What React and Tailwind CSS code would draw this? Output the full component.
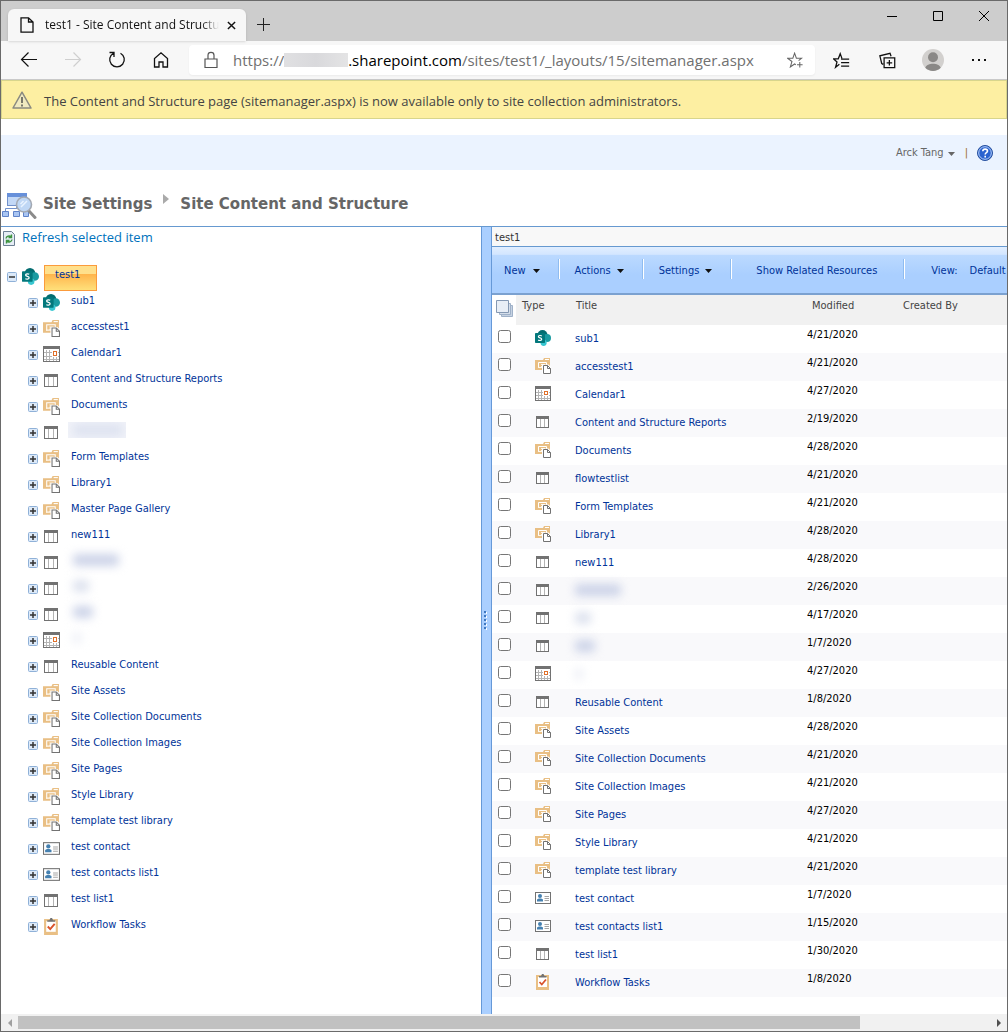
import React from 'react'

const items = [
  { name: 'sub1', type: 'site', modified: '4/21/2020' },
  { name: 'accesstest1', type: 'library', modified: '4/21/2020' },
  { name: 'Calendar1', type: 'calendar', modified: '4/27/2020' },
  { name: 'Content and Structure Reports', type: 'list', modified: '2/19/2020' },
  { name: 'Documents', type: 'library', modified: '4/28/2020' },
  { name: 'flowtestlist', type: 'list', modified: '4/21/2020', treeMask: 'w-[50px] bg-[#dde2f0]', treePatch: true },
  { name: 'Form Templates', type: 'library', modified: '4/21/2020' },
  { name: 'Library1', type: 'library', modified: '4/28/2020' },
  { name: 'Master Page Gallery', type: 'library', treeOnly: true },
  { name: 'new111', type: 'list', modified: '4/28/2020' },
  { id: 'h1', type: 'list', modified: '2/26/2020', mask: 'w-[46px] bg-[#ccd3e8]' },
  { id: 'h2', type: 'list', modified: '4/17/2020', mask: 'w-4 bg-[#dce1ee]' },
  { id: 'h3', type: 'list', modified: '1/7/2020', mask: 'w-5 bg-[#ccd3e8]' },
  { id: 'h4', type: 'calendar', modified: '4/27/2020', mask: 'w-2 bg-[#eceff6]' },
  { name: 'Reusable Content', type: 'list', modified: '1/8/2020' },
  { name: 'Site Assets', type: 'library', modified: '4/28/2020' },
  { name: 'Site Collection Documents', type: 'library', modified: '4/21/2020' },
  { name: 'Site Collection Images', type: 'library', modified: '4/21/2020' },
  { name: 'Site Pages', type: 'library', modified: '4/27/2020' },
  { name: 'Style Library', type: 'library', modified: '4/21/2020' },
  { name: 'template test library', type: 'library', modified: '4/21/2020' },
  { name: 'test contact', type: 'contact', modified: '1/7/2020' },
  { name: 'test contacts list1', type: 'contact', modified: '1/15/2020' },
  { name: 'test list1', type: 'list', modified: '1/30/2020' },
  { name: 'Workflow Tasks', type: 'task', modified: '1/8/2020' },
]

function TypeIcon({ type, className = 'size-4' }) {
  const cls = `block shrink-0 ${className}`
  if (type === 'site') {
    return (
      <svg viewBox="0 0 16 16" className={cls}>
        <circle cx="7.500" cy="5" r="5" fill="#036c70" />
        <circle cx="12" cy="8" r="4" fill="#1a9ba1" />
        <circle cx="8.600" cy="12.800" r="3.100" fill="#37c6d0" />
        <rect x="0" y="3" width="10" height="10" rx="0.8" fill="#03787c" />
        <path d="M6.800 5.900C6 5.300 3.400 5.200 3.400 6.700c0 1.600 3.300.9 3.300 2.500 0 1.600-2.700 1.500-3.500.8" fill="none" stroke="#fff" strokeWidth="1.200" />
      </svg>
    )
  }
  if (type === 'library') {
    return (
      <svg viewBox="0 0 16 16" className={cls}>
        <path d="M0 2h8l1-2h6v12H0z" fill="#e9bf84" />
        <path d="M10 1.500h4" stroke="#fff" />
        <path d="M3.500 10V4.500h8V7" fill="none" stroke="#fff" />
        <path d="M3 9.500h5M6 6.500h4M6 8.500h2" fill="none" stroke="#fff8ea" />
        <path d="M7 15.500V6.500h6.500L16 9v7H7z" fill="#fff" />
        <path d="M8.500 7.500h4l3 3v5h-7z" fill="#fff" stroke="#727272" />
        <path d="M12.500 7.500v3h3" fill="none" stroke="#727272" />
      </svg>
    )
  }
  if (type === 'calendar') {
    return (
      <svg viewBox="0 0 16 16" className={cls} shapeRendering="crispEdges">
        <rect x="0.5" y="1.5" width="15" height="13" fill="#fff" stroke="#727272" />
        <path d="M3.500 4v10M6.500 4v10M9.500 4v10M12.500 4v10M1 6.500h14M1 9.500h14M1 12.500h14" stroke="#b4b4b4" />
        <rect x="0" y="0" width="16" height="3" fill="#727272" />
        <rect x="8" y="4" width="6" height="6" fill="#fff" />
        <rect x="9.500" y="5.500" width="3" height="3" fill="#fff" stroke="#e0702a" />
      </svg>
    )
  }
  if (type === 'contact') {
    return (
      <svg viewBox="0 0 16 16" className={cls}>
        <rect x="0.5" y="2.5" width="15" height="11" fill="#fff" stroke="#727272" />
        <circle cx="5" cy="6" r="2" fill="#4580b0" />
        <path d="M2 11.500V9.500C3 8 7 8 8 9.500v2z" fill="#4580b0" />
        <path d="M9.500 6.500H14M9.500 8.500H14M9.500 10.500H14" stroke="#a5a5a5" />
      </svg>
    )
  }
  if (type === 'task') {
    return (
      <svg viewBox="0 0 16 16" className={cls}>
        <path d="M1 1h13v15H1z" fill="#e9bf84" />
        <path d="M3 3h9v10H3z" fill="#fff" />
        <path d="M4 3.500V2h2l1-2h1.500l1 2h2v1.500z" fill="#727272" />
        <path d="M4.500 8l2.300 2.500L11 5.500" fill="none" stroke="#d9532c" strokeWidth="1.800" />
      </svg>
    )
  }
  return (
    <svg viewBox="0 0 16 16" className={cls} shapeRendering="crispEdges">
      <rect x="1.500" y="2.500" width="12" height="11" fill="#fff" stroke="#727272" />
      <path d="M5.500 5v8M9.500 5v8" stroke="#b4b4b4" />
      <rect x="1" y="2" width="13" height="3" fill="#727272" />
    </svg>
  )
}

function Expander({ open }) {
  return (
    <button aria-label={open ? 'Collapse' : 'Expand'} className="mt-[7px] shrink-0">
      <svg viewBox="0 0 10 10" className="block size-[10px]">
        <rect x="0.5" y="0.5" width="9" height="9" rx="1" fill="#dce9f8" stroke="#8fb1d8" />
        <path d={open ? 'M2 5h6' : 'M2 5h6M5 2v6'} stroke="#333" strokeWidth="1.500" />
      </svg>
    </button>
  )
}

function Mask({ className }) {
  return <span className={`block h-3 rounded blur-[5px] ${className}`} />
}

function Caret({ className = '' }) {
  return (
    <svg viewBox="0 0 7 4" className={`block h-1 w-[7px] ${className}`}>
      <path d="M0 0h7L3.500 4z" fill="currentColor" />
    </svg>
  )
}

function Glyph({ children, size = 'size-5' }) {
  return (
    <svg viewBox="0 0 20 20" className={`block ${size}`} fill="none" stroke="currentColor">
      {children}
    </svg>
  )
}

function TitleBar() {
  return (
    <div className="flex h-10 items-start justify-between bg-[#cdcdcd]">
      <div className="flex h-10 items-end">
        <div className="ml-[7px] flex h-8 w-[238px] items-center rounded-t-md bg-[#f7f7f7] pr-[10px] pl-3 shadow">
          <svg viewBox="0 0 14 16" className="block h-4 w-[14px] shrink-0" fill="none" stroke="#111" strokeWidth="1.300">
            <path d="M1 .8h7.500L13 5v10.200H1zM8.500 1v4H13" />
          </svg>
          <span className="ml-[11px] flex-1 overflow-hidden text-[12px] leading-4 whitespace-nowrap text-[#111] [mask-image:linear-gradient(to_right,#000_90%,transparent)]">
            test1 - Site Content and Structure
          </span>
          <button aria-label="Close tab" className="ml-2 text-[#111]">
            <svg viewBox="0 0 10 10" className="block size-[9px]" stroke="currentColor" strokeWidth="1.600">
              <path d="M1 1l8 8M9 1L1 9" />
            </svg>
          </button>
        </div>
        <button aria-label="New tab" className="mb-[10px] ml-[11px] text-[#222]">
          <svg viewBox="0 0 13 13" className="block size-[13px]" stroke="currentColor">
            <path d="M6.500 0v13M0 6.500h13" />
          </svg>
        </button>
      </div>
      <div className="flex text-black">
        <button aria-label="Minimize" className="flex h-[29px] w-[46px] items-center justify-center">
          <svg viewBox="0 0 10 10" className="size-[10px]" stroke="currentColor"><path d="M0 5.500h10" /></svg>
        </button>
        <button aria-label="Maximize" className="flex h-[29px] w-[46px] items-center justify-center">
          <svg viewBox="0 0 10 10" className="size-[10px]" fill="none" stroke="currentColor"><path d="M.5.5h9v9h-9z" /></svg>
        </button>
        <button aria-label="Close" className="flex h-[29px] w-[46px] items-center justify-center">
          <svg viewBox="0 0 10 10" className="size-[10px]" stroke="currentColor"><path d="M0 0l10 10M10 0L0 10" /></svg>
        </button>
      </div>
    </div>
  )
}

function NavButton({ label, className = 'w-11 text-[#111]', children }) {
  return (
    <button aria-label={label} className={`flex h-[30px] shrink-0 items-center justify-center ${className}`}>
      {children}
    </button>
  )
}

function AddressBar() {
  return (
    <div className="flex h-[39px] items-center border-b border-[#c9c9c9] bg-[#f7f7f7] pr-[5px] pl-[6px]">
      <NavButton label="Back"><Glyph><path d="M18 9.500H2.500M9.500 2.500l-7 7 7 7" strokeWidth="1.200" /></Glyph></NavButton>
      <NavButton label="Forward" className="w-11 text-[#cfcfcf]"><Glyph><path d="M2 9.500h15.500M10.500 2.500l7 7-7 7" strokeWidth="1.200" /></Glyph></NavButton>
      <NavButton label="Refresh">
        <Glyph><path d="M13.500 3.200A7.300 7.300 0 1 1 6.500 3.200M2.500 2.500h4.500v4.500" strokeWidth="1.300" /></Glyph>
      </NavButton>
      <NavButton label="Home">
        <Glyph><path d="M3.500 8.500V17H8v-5h4v5h4.500V8.500L10 2.800z" strokeWidth="1.300" /></Glyph>
      </NavButton>
      <div className="mr-[3px] ml-[6px] flex h-[30px] min-w-0 flex-1 items-center rounded bg-white pr-3 pl-[14px] text-[15px] text-[#707070] shadow-xs">
        <svg viewBox="0 0 16 18" className="mr-[14px] block h-[18px] w-4 shrink-0" fill="none" stroke="#555" strokeWidth="1.200">
          <path d="M2 8h12v8.500H2zM5 8V4.200C5 .4 11 .4 11 4.200V8" />
        </svg>
        <label htmlFor="url" className="flex shrink-0 items-center">
          <span>https://</span>
          <span className="block h-[14px] w-16 bg-linear-to-r from-[#e0e0e2] via-[#d9d9dc] to-[#e4e4e5]" />
          <span className="text-black">.sharepoint.com</span>
        </label>
        <input id="url" defaultValue="/sites/test1/_layouts/15/sitemanager.aspx" className="min-w-0 flex-1 bg-transparent outline-none" />
        <button aria-label="Add to favorites" className="text-[#666]">
          <Glyph size="size-4">
            <path d="M11 16l-1.500-1-5.300 3.700 2-6.800L.8 7.800h6.500L9.500 1.500l2.200 6.300h6.500L14.500 10.700M16 12.500v7M12.500 16h7" strokeWidth="1.300" />
          </Glyph>
        </button>
      </div>
      <NavButton label="Favorites" className="w-[46px] text-[#111]">
        <Glyph size="size-[17px]">
          <path d="M7.500 14.500l-4.500 3.500 1.700-6.300L.5 8h5.700L8.500 2l2 5.500M9.500 8.500H19M9.500 12.500H19M9.500 16.500H19" strokeWidth="1.500" />
        </Glyph>
      </NavButton>
      <NavButton label="Collections" className="w-[46px] text-[#111]">
        <Glyph size="size-[17px]">
          <path d="M6 7h12.500v11.500H6zM12.200 9.500v6.500M9 12.700h6.500M5 14.500l-1.800-1L1 4.500 13 1.500l1.200 3.500" strokeWidth="1.500" />
        </Glyph>
      </NavButton>
      <NavButton label="Profile" className="w-[46px]">
        <svg viewBox="0 0 22 22" className="size-[22px]">
          <circle cx="11" cy="11" r="11" fill="#d2d0ce" />
          <circle cx="11" cy="8.300" r="5" fill="#8a8886" />
          <path d="M3.300 18.800C5 13.500 17 13.500 18.700 18.800a11 11 0 0 1-15.400 0z" fill="#8a8886" />
        </svg>
      </NavButton>
      <NavButton label="Settings and more" className="w-[46px] text-[#111]">
        <svg viewBox="0 0 14 2" className="h-[2px] w-[14px]" fill="currentColor"><path d="M0 0h2v2H0zM6 0h2v2H6zM12 0h2v2h-2z" /></svg>
      </NavButton>
    </div>
  )
}

function PageHeader() {
  return (
    <>
      <div className="flex h-[39px] items-center border border-[#d8d58c] bg-[#fdefa2] pt-1 pl-[10px] font-['Open_Sans',sans-serif] text-[13px] text-[#444]">
        <svg viewBox="0 0 20 18" className="mr-3 mb-1 block h-[18px] w-5 shrink-0">
          <path d="M10 1.200L19 17H1z" fill="#f0eac0" stroke="#8a8a80" strokeWidth="1.500" strokeLinejoin="round" />
          <path d="M10 6v6M10 13.500v2" stroke="#77776a" strokeWidth="2" />
        </svg>
        <p>The Content and Structure page (sitemanager.aspx) is now available only to site collection administrators.</p>
      </div>
      <div className="mt-4 flex h-[35px] items-center justify-end bg-[#ebf3ff] pr-[14px] text-[#666]">
        <button className="flex items-center pt-[2px]">
          Arck Tang
          <Caret className="ml-1" />
        </button>
        <span className="mr-[9px] ml-[10px] pt-[2px] text-[#9a6b2a]">|</span>
        <a href="#help" aria-label="Help">
          <svg viewBox="0 0 16 16" className="block size-4">
            <circle cx="8" cy="8" r="7.500" fill="#2a62cf" stroke="#27509e" />
            <circle cx="8" cy="8" r="6.300" fill="none" stroke="#b7d0f8" />
            <path d="M5.800 6.300c0-3 4.700-2.800 4.700-.2 0 1.600-2.300 1.600-2.300 3.400M8.200 10.800v1.600" fill="none" stroke="#fff" strokeWidth="1.600" />
          </svg>
        </a>
      </div>
      <div className="flex h-[57px] items-start border-b border-[#6699d0] pt-[22px] font-['DejaVu_Sans',sans-serif] text-[15px] leading-6 font-bold text-[#666]">
        <svg viewBox="0 0 36 28" className="mr-[6px] block h-7 w-9 shrink-0">
          <rect x="6.500" y="1.500" width="19" height="12" fill="#c3d8f6" stroke="#7191cc" />
          <path d="M6 1h20v4H6z" fill="#6790da" />
          <path d="M15.500 13v4M4.500 19v-2.500h18" fill="none" stroke="#7191cc" />
          <path d="M1.500 19.500h6v5h-6zM12.500 19.500h6v5h-6zM22.500 19.500h5v5h-5z" fill="#a9c5f2" stroke="#5f83c9" />
          <path d="M28 19l6 6.500" stroke="#8b8b8b" strokeWidth="3" strokeLinecap="round" />
          <circle cx="23" cy="12.500" r="7.500" fill="#bfd7f5" stroke="#a3a9b3" strokeWidth="1.600" />
          <path d="M19.500 12l3-3M20 15l6-6" stroke="#e9f3ff" strokeWidth="1.500" />
        </svg>
        <span>Site Settings</span>
        <svg viewBox="0 0 6 10" className="mx-[11px] mt-[2px] block h-[10px] w-[6px]"><path d="M0 0l6 5-6 5z" fill="#aaa" /></svg>
        <h1>Site Content and Structure</h1>
      </div>
    </>
  )
}

function TreeRow({ item }) {
  const mask = item.mask || item.treeMask
  return (
    <li className="flex h-[26px] items-start pl-[27px]">
      <Expander />
      <TypeIcon type={item.type} className="mt-[3px] ml-[5px] size-[17px]" />
      {mask ? (
        <span className={`mt-px ml-2 pt-[2px] pl-[5px] ${item.treePatch ? 'h-4 w-[58px] overflow-hidden bg-[#f1f3f9]' : ''}`}>
          <Mask className={mask} />
        </span>
      ) : (
        <a href="#item" className="ml-[11px] leading-5">{item.name}</a>
      )}
    </li>
  )
}

function Tree() {
  return (
    <div className="w-[480px] shrink-0 text-[#003399]">
      <a href="#refresh" className="flex h-[38px] items-start pt-px pl-[2px] font-['Open_Sans',sans-serif] text-[13px] leading-[18px] text-[#0072bc]">
        <svg viewBox="0 0 12 15" className="mt-[3px] mr-[7px] block h-[15px] w-3">
          <path d="M.5.5h8l3 3v11H.5z" fill="#e6edf5" stroke="#6d7f93" />
          <path d="M3 7.500C3.300 5 6.500 4.500 8 5.500M8.500 3.500v3h-3M9 8.500C8.700 11 5.500 11.500 4 10.500M3.500 12.500v-3h3" fill="none" stroke="#3f9440" strokeWidth="1.400" />
        </svg>
        Refresh selected item
      </a>
      <div className="flex h-[26px] items-start pl-[6px]">
        <Expander open />
        <TypeIcon type="site" className="mt-[3px] ml-[5px] size-[17px]" />
        <a href="#test1" className="ml-[5px] h-[26px] border border-[#fb9b3c] bg-linear-to-b from-[#ffe08c] from-35% via-[#ffb54c] via-35% to-[#ffe07a] pr-4 pl-[10px] leading-[18px]">
          test1
        </a>
      </div>
      <ul>
        {items.map(item => <TreeRow key={item.name || item.id} item={item} />)}
      </ul>
    </div>
  )
}

function Divider() {
  return <span className="h-5 w-[2px] shrink-0 border-l border-[#8fbcf0] bg-white" />
}

function MenuBar() {
  return (
    <div className="flex h-12 items-start overflow-hidden border-b-2 border-[#7ba1d0] bg-[linear-gradient(#e1eeff,#d3e6ff_16%,#bbd9ff_18%,#aacfff_60%)] pt-3 leading-6 whitespace-nowrap text-[#003399]">
      <button className="flex items-center pr-[18px] pl-3">New <Caret className="ml-[7px] text-[#111]" /></button>
      <Divider />
      <button className="flex items-center pr-[18px] pl-[15px]">Actions <Caret className="ml-[6px] text-[#111]" /></button>
      <Divider />
      <button className="flex items-center pr-[18px] pl-[15px]">Settings <Caret className="ml-[6px] text-[#111]" /></button>
      <Divider />
      <button className="pr-[26px] pl-6">Show Related Resources</button>
      <Divider />
      <span className="pr-3 pl-[26px]">View:</span>
      <button className="flex shrink-0 items-center">Default <Caret className="ml-[5px] text-[#111]" /></button>
    </div>
  )
}

function ItemTable() {
  return (
    <table className="w-full table-fixed border-collapse text-left">
      <colgroup>
        <col className="w-6" />
        <col className="w-14" />
        <col className="w-[232px]" />
        <col className="w-24" />
        <col />
      </colgroup>
      <thead>
        <tr className="h-[30px] bg-[#f1f1f1] align-top leading-[14px] text-[#444]">
          <th className="bg-white pt-[5px] pl-1">
            <button aria-label="Select all" className="block">
              <svg viewBox="0 0 17 17" className="block size-[17px]">
                <path d="M5.500 5.500h11v11h-11z" fill="#c6d2e2" stroke="#9fb1c8" />
                <path d="M3.500 3.500h11v11h-11z" fill="#d5deea" stroke="#9fb1c8" />
                <path d="M.5.500h12v12H.5z" fill="#e8eef6" stroke="#8498b3" />
              </svg>
            </button>
          </th>
          <th className="pt-1 pl-[6px] font-normal">Type</th>
          <th className="pt-1 pl-1 font-normal">Title</th>
          <th className="pt-1 pl-2 font-normal">Modified</th>
          <th className="pt-1 pl-[3px] font-normal">Created By</th>
        </tr>
      </thead>
      <tbody>
        {items.filter(item => !item.treeOnly).map(item => (
          <tr key={item.name || item.id} className="h-7 align-top leading-[14px] even:bg-[#f9f9fb]">
            <td className="pt-[5px] pl-[6px]">
              <input type="checkbox" aria-label={`Select ${item.name || 'item'}`} className="block size-[13px]" />
            </td>
            <td className="pt-[5px] pl-[19px]"><TypeIcon type={item.type} /></td>
            <td className="pt-[7px] pl-[3px]">
              {item.mask
                ? <Mask className={item.mask} />
                : <a href="#item" className="text-[#003399]">{item.name}</a>}
            </td>
            <td className="pt-[3px] pl-[3px] text-black">{item.modified}</td>
            <td />
          </tr>
        ))}
      </tbody>
    </table>
  )
}

function ScrollBar() {
  return (
    <div className="flex h-[17px] items-center bg-[#f1f1f1]">
      <button aria-label="Scroll left" className="flex w-[17px] shrink-0 justify-center text-[#a0a0a0]">
        <svg viewBox="0 0 4 8" className="h-2 w-1" fill="currentColor"><path d="M4 0v8L0 4z" /></svg>
      </button>
      <div className="flex-1 pr-[130px]">
        <div className="h-[13px] bg-[#c1c1c1]" />
      </div>
      <button aria-label="Scroll right" className="flex w-[17px] shrink-0 justify-center text-[#505050]">
        <svg viewBox="0 0 4 8" className="h-2 w-1" fill="currentColor"><path d="M0 0v8l4-4z" /></svg>
      </button>
    </div>
  )
}

export default function App() {
  return (
    <div className="flex min-h-screen flex-col border border-[#6a6a6a] bg-white font-['DejaVu_Sans_Condensed','DejaVu_Sans',sans-serif] text-[11px]">
      <header className="font-['Open_Sans',sans-serif]">
        <TitleBar />
        <AddressBar />
      </header>
      <PageHeader />
      <main className="flex flex-1">
        <Tree />
        {/* Splitter */}
        <div className="flex w-[11px] shrink-0 items-center border-x border-[#6699d8] bg-[#aacfff] pl-[2px]">
          <svg viewBox="0 0 3 20" className="block h-5 w-[3px]">
            <path d="M1 0v20" stroke="#3f78c0" strokeWidth="2" strokeDasharray="2 2" />
            <path d="M2.500 1v19" stroke="#fff" strokeDasharray="2 2" />
          </svg>
        </div>
        <section className="min-w-0 flex-1">
          <h2 className="h-5 border-b border-[#6699d0] bg-[#f8f8f8] pl-[3px] leading-[21px] text-[#333]">test1</h2>
          <MenuBar />
          <ItemTable />
        </section>
      </main>
      <ScrollBar />
    </div>
  )
}
